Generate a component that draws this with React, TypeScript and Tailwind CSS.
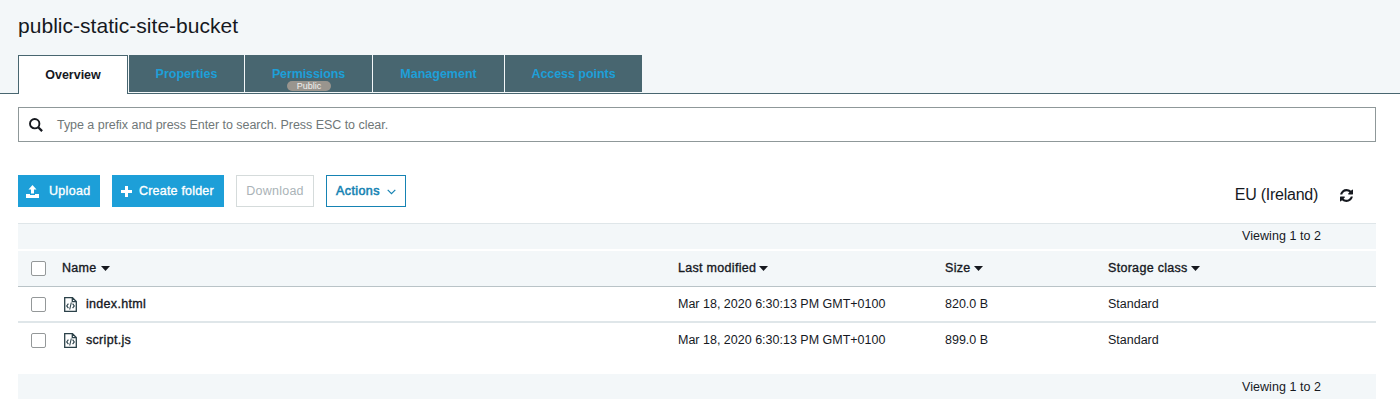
import type { ReactNode } from "react";

const medium = "[-webkit-text-stroke:0.35px_currentColor]";

const tabs = [
  { label: "Properties", box: "w-[115px] mr-px" },
  { label: "Permissions", box: "w-[127px] mr-px tracking-[-0.1px]", badge: "Public" },
  { label: "Management", box: "w-[131px] mr-px" },
  { label: "Access points", box: "w-[137px] tracking-[-0.05px]" },
];

const files = [
  { name: "index.html", modified: "Mar 18, 2020 6:30:13 PM GMT+0100", size: "820.0 B", storage: "Standard" },
  { name: "script.js", modified: "Mar 18, 2020 6:30:13 PM GMT+0100", size: "899.0 B", storage: "Standard" },
];

const grid = "grid grid-cols-[44px_616px_267px_163px_1fr] items-center";

function Caret() {
  return (
    <svg width="9" height="5" viewBox="0 0 9 5" className="ml-[3px] fill-[#16191f]">
      <path d="M0 0h9L4.500 5z" />
    </svg>
  );
}

function FileIcon() {
  return (
    <svg width="13" height="15" viewBox="0 0 13 15" fill="none" stroke="#2b4149" strokeWidth="1.3" className="mr-[9px] ml-[2px]">
      <path d="M.7.7h7.800l3.800 3.800v9.800H.7zM8.300.9v3.800h3.800" />
      <path d="M4.400 6.600 2.700 8.900l1.700 2.300M8.600 6.600l1.700 2.300-1.700 2.300M7.300 5.500l-1.600 7" strokeWidth="1.1" />
    </svg>
  );
}

function Checkbox() {
  return <span className="ml-[13px] block size-[15px] rounded-[2px] border border-[#949899] bg-white" />;
}

function Head({ children }: { children: ReactNode }) {
  return (
    <div className={`flex items-center tracking-[0.3px] ${medium}`}>
      {children}
      <Caret />
    </div>
  );
}

function Viewing({ className }: { className: string }) {
  return (
    <div className={`flex items-center justify-end bg-[#f3f7f9] pr-[55px] text-[12.5px] tracking-[0.05px] ${className}`}>Viewing 1 to 2</div>
  );
}

export default function App() {
  return (
    <div className="h-[401px] w-[1400px] overflow-hidden bg-white font-['Liberation_Sans',Arial,sans-serif] text-[12.5px] text-[#16191f]">
      <header className="flex h-[94px] flex-col bg-[#f3f7f9]">
        <h1 className="h-[55px] pt-[11px] pl-[18px] text-[21px] leading-[30px] tracking-[0.03px]">public-static-site-bucket</h1>
        <nav className="flex h-[39px]">
          <div className="w-[18px] border-b border-[#486670]" />
          <div className="flex w-[110px] items-center justify-center border border-b-0 border-[#486670] bg-white font-bold">
            Overview
          </div>
          <div className="flex flex-1 border-b border-[#486670] pb-px pl-px">
            {tabs.map((t) => (
              <div key={t.label} className={`relative flex h-[37px] items-center justify-center bg-[#486670] pt-[2px] font-bold text-[#1d9fd8] ${t.box}`}>
                {t.label}
                {t.badge && (
                  <span className="absolute top-[26px] left-[42px] flex h-[10px] w-[44px] items-center justify-center rounded-full bg-[#99958e] text-[9px] leading-none font-normal tracking-normal text-[#f1f1ef]">
                    {t.badge}
                  </span>
                )}
              </div>
            ))}
          </div>
        </nav>
      </header>

      <main className="pr-[24px] pl-[18px]">
        <div className="mt-[13px] flex h-[35px] items-center border border-[#8f9899] text-[#6f7778]">
          <svg width="14" height="14" viewBox="0 0 14 14" fill="none" stroke="#16191f" className="mt-px ml-[10px]">
            <circle cx="5.700" cy="5.700" r="4.700" strokeWidth="1.9" />
            <path d="m9.200 9.200 3.900 3.900" strokeWidth="2.300" />
          </svg>
          <span className="ml-[14px] pt-[2px] tracking-[-0.04px]">Type a prefix and press Enter to search. Press ESC to clear.</span>
        </div>

        <div className="mt-[33px] flex h-[32px] items-stretch">
          <button className={`flex w-[82px] items-center bg-[#1d9fd8] pl-[8px] text-white ${medium}`}>
            <svg width="13" height="13" viewBox="0 0 13 13" fill="currentColor" className="mt-px">
              <path d="M6.500 0 10.500 4.500H8V8.500H5V4.500H2.500zM0 9h4v1h5V9h4v4H0z" />
            </svg>
            <span className="ml-[10px] tracking-[0.3px]">Upload</span>
          </button>
          <button className={`ml-[12px] flex w-[112px] items-center bg-[#1d9fd8] pl-[9px] text-white ${medium}`}>
            <svg width="11" height="11" viewBox="0 0 11 11" fill="currentColor">
              <path d="M4 0h3v4h4v3H7v4H4V7H0V4h4z" />
            </svg>
            <span className="ml-[7px] tracking-[0.2px]">Create folder</span>
          </button>
          <button className="ml-[12px] flex w-[78px] items-center justify-center border border-[#d5dbdb] tracking-[0.25px] text-[#aab3b7]">
            Download
          </button>
          <button className="ml-[12px] flex w-[80px] items-center border border-[#1683b3] pl-[9px] tracking-[0.4px] text-[#1683b3] [-webkit-text-stroke:0.55px_currentColor]">
            Actions
            <svg width="9" height="6" viewBox="0 0 9 6" fill="none" stroke="currentColor" strokeWidth="1.2" className="mt-[2px] ml-[7px]">
              <path d="m.7.8 3.800 3.800L8.300.8" />
            </svg>
          </button>
          <div className="ml-auto flex items-center pt-[7px] pr-[23px]">
            <span className="text-[16px] tracking-[-0.25px]">EU (Ireland)</span>
            <svg width="13" height="13" viewBox="0 0 1536 1536" fill="#16191f" className="mt-[2px] ml-[22px]">
              <path d="M1511 928q0 5-1 7-64 268-268 434.500T764 1536q-146 0-282.500-55T238 1324l-129 129q-19 19-45 19t-45-19-19-45V960q0-26 19-45t45-19h448q26 0 45 19t19 45-19 45l-137 137q71 66 161 102t187 36q134 0 250-65t186-179q11-17 53-117 8-23 30-23h192q13 0 22.500 9.500t9.500 22.500zm25-800v448q0 26-19 45t-45 19h-448q-26 0-45-19t-19-45 19-45l138-138Q969 256 768 256q-134 0-250 65T332 500q-11 17-53 117-8 23-30 23H50q-13 0-22.500-9.500T18 608v-7q65-268 270-434.500T768 0q146 0 284 55.500T1297 212l130-129q19-19 45-19t45 19 19 45z" />
            </svg>
          </div>
        </div>

        <Viewing className="mt-[16px] h-[26px] border-t border-[#dfe6e9]" />
        <div className={`mt-[2px] h-[36px] border-b border-[#b9c3c7] bg-[#f3f7f9] ${grid}`}>
          <Checkbox />
          <Head>
            <span className="pr-px">Name</span>
          </Head>
          <Head>Last modified</Head>
          <Head>Size</Head>
          <Head>Storage class</Head>
        </div>
        {files.map((f, i) => (
          <div key={f.name} className={`${grid} ${i === 0 ? "h-[36px] border-b-2 border-[#dfe6e9] pt-px" : "h-[35px] pb-px"}`}>
            <Checkbox />
            <div className={`flex items-center tracking-[0.3px] ${medium}`}>
              <FileIcon />
              {f.name}
            </div>
            <div>{f.modified}</div>
            <div>{f.size}</div>
            <div>{f.storage}</div>
          </div>
        ))}
        <Viewing className="mt-[16px] h-[25px] pt-px" />
      </main>
    </div>
  );
}
